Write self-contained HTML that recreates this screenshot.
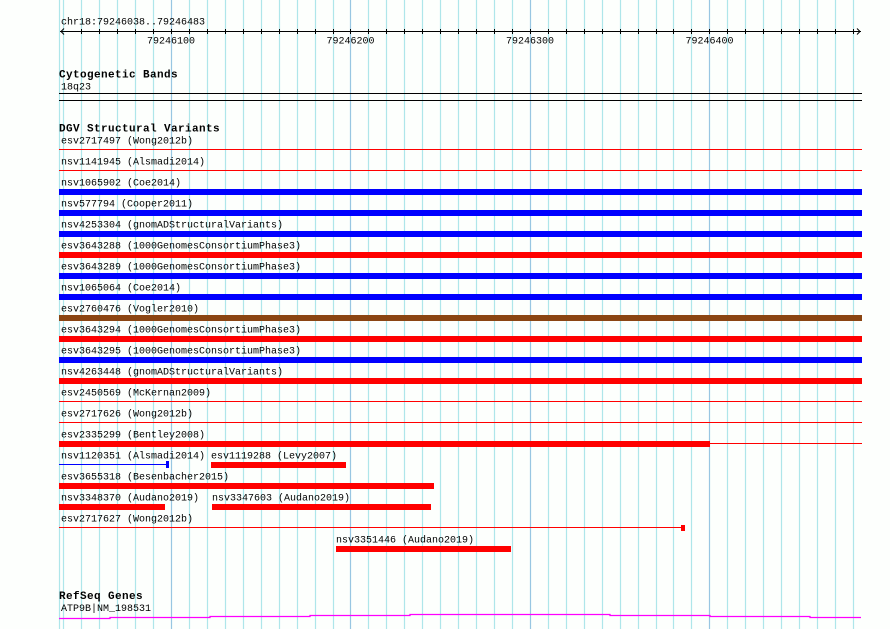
<!DOCTYPE html>
<html><head><meta charset="utf-8"><style>
html,body{margin:0;padding:0;background:#fff;}
svg{display:block}
text{font-family:"Liberation Mono","DejaVu Sans Mono",monospace;font-size:10px;fill:#000}
.b{font-weight:bold;font-size:11px;letter-spacing:0.4px}
</style></head><body>
<svg width="890" height="629" viewBox="0 0 890 629" xmlns="http://www.w3.org/2000/svg">
<rect width="890" height="629" fill="#fdfffd"/>
<g stroke="#aee6ea" stroke-width="1.2">
<line x1="59.5" y1="0" x2="59.5" y2="629"/>
<line x1="63.5" y1="0" x2="63.5" y2="629"/><line x1="81.5" y1="0" x2="81.5" y2="629"/><line x1="99.5" y1="0" x2="99.5" y2="629"/><line x1="117.5" y1="0" x2="117.5" y2="629"/><line x1="135.5" y1="0" x2="135.5" y2="629"/><line x1="153.5" y1="0" x2="153.5" y2="629"/>
<line x1="189.5" y1="0" x2="189.5" y2="629"/><line x1="207.5" y1="0" x2="207.5" y2="629"/><line x1="225.5" y1="0" x2="225.5" y2="629"/><line x1="243.5" y1="0" x2="243.5" y2="629"/><line x1="261.5" y1="0" x2="261.5" y2="629"/><line x1="279.5" y1="0" x2="279.5" y2="629"/><line x1="297.5" y1="0" x2="297.5" y2="629"/><line x1="315.5" y1="0" x2="315.5" y2="629"/><line x1="333.5" y1="0" x2="333.5" y2="629"/>
<line x1="368.5" y1="0" x2="368.5" y2="629"/><line x1="386.5" y1="0" x2="386.5" y2="629"/><line x1="404.5" y1="0" x2="404.5" y2="629"/><line x1="422.5" y1="0" x2="422.5" y2="629"/><line x1="440.5" y1="0" x2="440.5" y2="629"/><line x1="458.5" y1="0" x2="458.5" y2="629"/><line x1="476.5" y1="0" x2="476.5" y2="629"/><line x1="494.5" y1="0" x2="494.5" y2="629"/><line x1="512.5" y1="0" x2="512.5" y2="629"/>
<line x1="548.5" y1="0" x2="548.5" y2="629"/><line x1="566.5" y1="0" x2="566.5" y2="629"/><line x1="584.5" y1="0" x2="584.5" y2="629"/><line x1="602.5" y1="0" x2="602.5" y2="629"/><line x1="620.5" y1="0" x2="620.5" y2="629"/><line x1="638.5" y1="0" x2="638.5" y2="629"/><line x1="656.5" y1="0" x2="656.5" y2="629"/><line x1="673.5" y1="0" x2="673.5" y2="629"/><line x1="691.5" y1="0" x2="691.5" y2="629"/>
<line x1="727.5" y1="0" x2="727.5" y2="629"/><line x1="745.5" y1="0" x2="745.5" y2="629"/><line x1="763.5" y1="0" x2="763.5" y2="629"/><line x1="781.5" y1="0" x2="781.5" y2="629"/><line x1="799.5" y1="0" x2="799.5" y2="629"/><line x1="817.5" y1="0" x2="817.5" y2="629"/><line x1="835.5" y1="0" x2="835.5" y2="629"/><line x1="853.5" y1="0" x2="853.5" y2="629"/>
</g>
<g stroke="#98c6e2" stroke-width="1.2">
<line x1="171.5" y1="0" x2="171.5" y2="629"/><line x1="350.5" y1="0" x2="350.5" y2="629"/><line x1="530.5" y1="0" x2="530.5" y2="629"/><line x1="709.5" y1="0" x2="709.5" y2="629"/>
</g>
<!-- ruler -->
<text x="61" y="24.5">chr18:79246038..79246483</text>
<g stroke="#000" stroke-width="1">
<line x1="60" y1="31.5" x2="861" y2="31.5"/>
<polyline points="64,28.5 61,31.5 64,34.5" fill="none"/>
<polyline points="857,28.5 860,31.5 857,34.5" fill="none"/>
</g>
<g stroke="#000" stroke-width="1">
<line x1="81.5" y1="29" x2="81.5" y2="34"/><line x1="99.5" y1="29" x2="99.5" y2="34"/><line x1="117.5" y1="29" x2="117.5" y2="34"/><line x1="135.5" y1="29" x2="135.5" y2="34"/><line x1="153.5" y1="29" x2="153.5" y2="34"/><line x1="171.5" y1="29" x2="171.5" y2="34"/><line x1="189.5" y1="29" x2="189.5" y2="34"/><line x1="207.5" y1="29" x2="207.5" y2="34"/><line x1="225.5" y1="29" x2="225.5" y2="34"/><line x1="243.5" y1="29" x2="243.5" y2="34"/><line x1="261.5" y1="29" x2="261.5" y2="34"/><line x1="279.5" y1="29" x2="279.5" y2="34"/><line x1="297.5" y1="29" x2="297.5" y2="34"/><line x1="315.5" y1="29" x2="315.5" y2="34"/><line x1="333.5" y1="29" x2="333.5" y2="34"/><line x1="350.5" y1="29" x2="350.5" y2="34"/><line x1="368.5" y1="29" x2="368.5" y2="34"/><line x1="386.5" y1="29" x2="386.5" y2="34"/><line x1="404.5" y1="29" x2="404.5" y2="34"/><line x1="422.5" y1="29" x2="422.5" y2="34"/><line x1="440.5" y1="29" x2="440.5" y2="34"/><line x1="458.5" y1="29" x2="458.5" y2="34"/><line x1="476.5" y1="29" x2="476.5" y2="34"/><line x1="494.5" y1="29" x2="494.5" y2="34"/><line x1="512.5" y1="29" x2="512.5" y2="34"/><line x1="530.5" y1="29" x2="530.5" y2="34"/><line x1="548.5" y1="29" x2="548.5" y2="34"/><line x1="566.5" y1="29" x2="566.5" y2="34"/><line x1="584.5" y1="29" x2="584.5" y2="34"/><line x1="602.5" y1="29" x2="602.5" y2="34"/><line x1="620.5" y1="29" x2="620.5" y2="34"/><line x1="638.5" y1="29" x2="638.5" y2="34"/><line x1="656.5" y1="29" x2="656.5" y2="34"/><line x1="673.5" y1="29" x2="673.5" y2="34"/><line x1="691.5" y1="29" x2="691.5" y2="34"/><line x1="709.5" y1="29" x2="709.5" y2="34"/><line x1="727.5" y1="29" x2="727.5" y2="34"/><line x1="745.5" y1="29" x2="745.5" y2="34"/><line x1="763.5" y1="29" x2="763.5" y2="34"/><line x1="781.5" y1="29" x2="781.5" y2="34"/><line x1="799.5" y1="29" x2="799.5" y2="34"/><line x1="817.5" y1="29" x2="817.5" y2="34"/><line x1="835.5" y1="29" x2="835.5" y2="34"/><line x1="853.5" y1="29" x2="853.5" y2="34"/>
</g>
<text x="171" y="43.5" text-anchor="middle">79246100</text>
<text x="350.5" y="43.5" text-anchor="middle">79246200</text>
<text x="530" y="43.5" text-anchor="middle">79246300</text>
<text x="709.5" y="43.5" text-anchor="middle">79246400</text>
<!-- cytobands -->
<text class="b" x="59" y="77.5">Cytogenetic Bands</text>
<text x="61" y="89.5">18q23</text>
<line x1="59" y1="93.5" x2="862" y2="93.5" stroke="#000"/>
<line x1="59" y1="100.5" x2="862" y2="100.5" stroke="#000"/>
<!-- DGV -->
<text class="b" x="59" y="131.5">DGV Structural Variants</text>
<g>
<text x="61" y="143.5">esv2717497 (Wong2012b)</text>
<text x="61" y="164.5">nsv1141945 (Alsmadi2014)</text>
<text x="61" y="185.5">nsv1065902 (Coe2014)</text>
<text x="61" y="206.5">nsv577794 (Cooper2011)</text>
<text x="61" y="227.5">nsv4253304 (gnomADStructuralVariants)</text>
<text x="61" y="248.5">esv3643288 (1000GenomesConsortiumPhase3)</text>
<text x="61" y="269.5">esv3643289 (1000GenomesConsortiumPhase3)</text>
<text x="61" y="290.5">nsv1065064 (Coe2014)</text>
<text x="61" y="311.5">esv2760476 (Vogler2010)</text>
<text x="61" y="332.5">esv3643294 (1000GenomesConsortiumPhase3)</text>
<text x="61" y="353.5">esv3643295 (1000GenomesConsortiumPhase3)</text>
<text x="61" y="374.5">nsv4263448 (gnomADStructuralVariants)</text>
<text x="61" y="395.5">esv2450569 (McKernan2009)</text>
<text x="61" y="416.5">esv2717626 (Wong2012b)</text>
<text x="61" y="437.5">esv2335299 (Bentley2008)</text>
<text x="61" y="458.5">nsv1120351 (Alsmadi2014)</text>
<text x="211" y="458.5">esv1119288 (Levy2007)</text>
<text x="61" y="479.5">esv3655318 (Besenbacher2015)</text>
<text x="61" y="500.5">nsv3348370 (Audano2019)</text>
<text x="212" y="500.5">nsv3347603 (Audano2019)</text>
<text x="61" y="521.5">esv2717627 (Wong2012b)</text>
<text x="336" y="542.5">nsv3351446 (Audano2019)</text>
</g>
<g>
<rect x="59" y="149" width="803" height="1" fill="#f00"/>
<rect x="59" y="170" width="803" height="1" fill="#f00"/>
<rect x="59" y="189" width="803" height="6" fill="#00f"/>
<rect x="59" y="210" width="803" height="6" fill="#00f"/>
<rect x="59" y="231" width="803" height="6" fill="#00f"/>
<rect x="59" y="252" width="803" height="6" fill="#f00"/>
<rect x="59" y="273" width="803" height="6" fill="#00f"/>
<rect x="59" y="294" width="803" height="6" fill="#00f"/>
<rect x="59" y="315" width="803" height="6" fill="#8b4513"/>
<rect x="59" y="336" width="803" height="6" fill="#f00"/>
<rect x="59" y="357" width="803" height="6" fill="#00f"/>
<rect x="59" y="378" width="803" height="6" fill="#f00"/>
<rect x="59" y="401" width="803" height="1" fill="#f00"/>
<rect x="59" y="422" width="803" height="1" fill="#f00"/>
<rect x="59" y="441" width="651" height="6" fill="#f00"/>
<rect x="709" y="443" width="153" height="1" fill="#f00"/>
<rect x="59" y="464" width="109" height="1" fill="#00f"/>
<rect x="166" y="461" width="3" height="7" fill="#00f"/>
<rect x="211" y="462" width="135" height="6" fill="#f00"/>
<rect x="59" y="483" width="375" height="6" fill="#f00"/>
<rect x="59" y="504" width="106" height="6" fill="#f00"/>
<rect x="212" y="504" width="219" height="6" fill="#f00"/>
<rect x="59" y="527" width="623" height="1" fill="#f00"/>
<rect x="681" y="525" width="4" height="6" fill="#f00"/>
<rect x="336" y="546" width="175" height="6" fill="#f00"/>
</g>
<!-- RefSeq -->
<text class="b" x="59" y="599">RefSeq Genes</text>
<text x="61" y="611">ATP9B|NM_198531</text>
<polyline fill="none" stroke="#f0f" stroke-width="1.3" points="59,618.5 110,618.5 110,617.5 210,617.5 210,616.5 310,616.5 310,615.5 410,615.5 410,614.5 610,614.5 610,615.5 710,615.5 710,616.5 810,616.5 810,617.5 861,617.5"/>
</svg>
</body></html>
